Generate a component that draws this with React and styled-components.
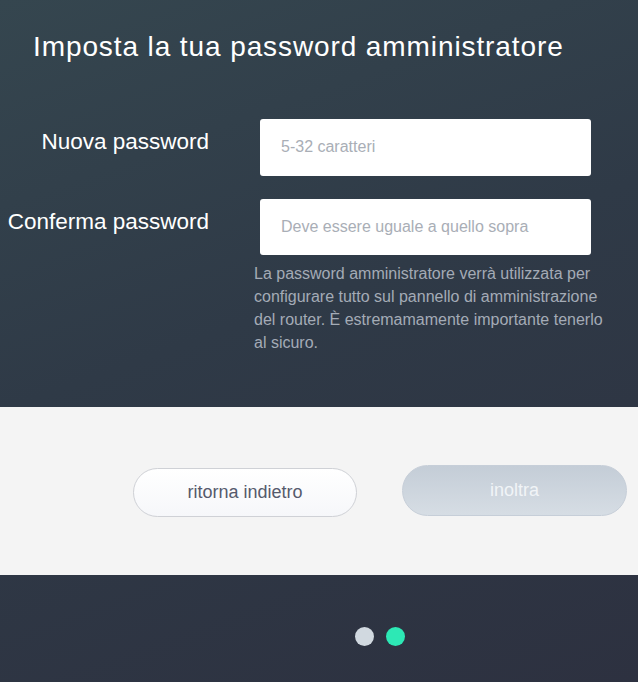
import React from "react";
import styled, { createGlobalStyle } from "styled-components";

const Global = createGlobalStyle`
  html, body { margin: 0; padding: 0; }
  body { font-family: "Liberation Sans", Arial, sans-serif; background: #2e3240; }
  * { box-sizing: border-box; }
`;

const Page = styled.div`
  width: 638px;
  height: 682px;
  display: flex;
  flex-direction: column;
  background: linear-gradient(160deg, #35464f 0%, #2f3a47 45%, #2d3140 100%);
  overflow: hidden;
`;

const Top = styled.section`
  height: 407px;
  display: flex;
  flex-direction: column;
  padding-top: 30px;
`;

const Title = styled.h1`
  margin: 0 0 0 33px;
  font-size: 28px;
  letter-spacing: 0.9px;
  font-weight: 400;
  color: #ffffff;
  line-height: 34px;
`;

const Form = styled.div`
  margin-top: 55px;
  display: flex;
  flex-direction: column;
  gap: 23px;
`;

const Row = styled.div`
  display: grid;
  grid-template-columns: 210px 331px;
  column-gap: 50px;
  align-items: center;
`;

const Label = styled.label`
  text-align: right;
  font-size: 22.5px;
  color: #ffffff;
  margin-top: -10px;
  padding-right: 1px;
`;

const Input = styled.input`
  height: 56.5px;
  border: none;
  border-radius: 3px;
  background: #ffffff;
  padding: 0 21px;
  font-family: "Liberation Sans", Arial, sans-serif;
  font-size: 16px;
  color: #333;
  outline: none;
  &::placeholder { color: #a9aeb6; }
`;

const Help = styled.p`
  margin: 7px 0 0 254px;
  width: 362px;
  font-size: 16px;
  line-height: 23px;
  color: #a4abb6;
`;

const Middle = styled.section`
  height: 168px;
  background: #f4f4f4;
  display: flex;
  align-items: center;
  padding-left: 133px;
  gap: 45px;
`;

const Button = styled.button`
  width: ${p => (p.$primary ? "225px" : "224px")};
  height: ${p => (p.$primary ? "51px" : "49px")};
  border-radius: 26px;
  font-family: "Liberation Sans", Arial, sans-serif;
  font-size: 18px;
  cursor: pointer;
  border: 1px solid ${p => (p.$primary ? "#c6ced8" : "#cfd1d6")};
  background: ${p =>
    p.$primary
      ? "linear-gradient(180deg, #c4cdd7 0%, #d6dde4 100%)"
      : "linear-gradient(180deg, #ffffff 0%, #f6f7fa 100%)"};
  color: ${p => (p.$primary ? "#f1f4f7" : "#555a6c")};
  margin-top: ${p => (p.$primary ? "-2px" : "2px")};
`;

const Bottom = styled.section`
  flex: 1;
  display: flex;
  justify-content: center;
  align-items: center;
  gap: 12px;
  padding-left: 122px;
  padding-top: 15px;
`;

const Dot = styled.span`
  width: 19px;
  height: 19px;
  border-radius: 50%;
  background: ${p => (p.$active ? "#2de8b5" : "#d1d9e0")};
`;

export default function App() {
  return (
    <>
      <Global />
      <Page>
        <Top>
          <Title>Imposta la tua password amministratore</Title>
          <Form>
            <Row>
              <Label>Nuova password</Label>
              <Input type="password" placeholder="5-32 caratteri" />
            </Row>
            <Row>
              <Label>Conferma password</Label>
              <Input type="password" placeholder="Deve essere uguale a quello sopra" />
            </Row>
          </Form>
          <Help>
            La password amministratore verrà utilizzata per configurare tutto sul pannello di amministrazione del router. È estremamamente importante tenerlo al sicuro.
          </Help>
        </Top>
        <Middle>
          <Button>ritorna indietro</Button>
          <Button $primary>inoltra</Button>
        </Middle>
        <Bottom>
          <Dot />
          <Dot $active />
        </Bottom>
      </Page>
    </>
  );
}
